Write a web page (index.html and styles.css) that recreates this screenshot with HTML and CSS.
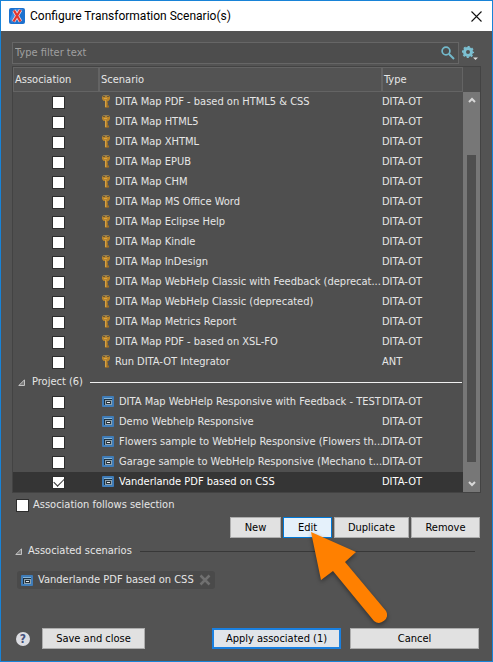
FILE: index.html
```html
<!DOCTYPE html>
<html lang="en">
<head>
<meta charset="utf-8">
<title>Configure Transformation Scenario(s)</title>
<link rel="stylesheet" href="styles.css">
</head>
<body>
<svg class="defs" aria-hidden="true">
  <symbol id="key" viewBox="0 0 8 13">
    <path d="M1 .5h6l1 1.500v2L6.500 6H5.500v6.500H3V6H1.500L0 4V2z" fill="#b98429"/>
    <path d="M1 1.500h2M5 1.500h2" stroke="#66563a"/>
    <path d="M1.500 .5h5" stroke="#8f7c55"/>
    <path d="M2 3.500h3M3.500 5v7" stroke="#d3a149" fill="none"/>
    <path d="M5 8h1v1.500H5zM5 10.500h2v2H5z" fill="#a37022"/>
  </symbol>
  <symbol id="proj" viewBox="0 0 12 11">
    <rect width="12" height="11" rx="1" fill="#3f7cb8"/>
    <rect x="2" y="2" width="8" height="7" fill="#1d3142"/>
    <path d="M2 2.500h8" stroke="#86b5d8"/>
    <path d="M3 4h7v5H3z" fill="#8fa3b0"/>
    <path d="M4 5h5v3H4z" fill="#26333d"/>
    <path d="M5 6h3v1H5z" fill="#e4e9ec"/>
  </symbol>
  <symbol id="twisty" viewBox="0 0 7 7">
    <path d="M6.500 .8v5.700H.8z" fill="#777" stroke="#c4c4c4"/>
  </symbol>
</svg>
<div class="window">
  <header class="titlebar">
    <svg class="logo" viewBox="0 0 16 16" aria-hidden="true">
      <rect width="16" height="16" rx="2" fill="#1c72cf"/>
      <path d="M1 11L5 1h9L3 15z" fill="#3d8ce0"/>
      <path d="M5 2.500l6.500 11M11.500 2L4.500 13.500" stroke="#f4d5d8" stroke-width="3.600"/>
      <path d="M5 2.500l6.500 11M11.500 2L4.500 13.500" stroke="#e0352c" stroke-width="2.200"/>
    </svg>
    <h1>Configure Transformation Scenario(s)</h1>
    <button class="close" aria-label="Close"><svg viewBox="0 0 11 11"><path d="M.5 .5l10 10M10.500 .5l-10 10" stroke="#111" stroke-width="1.100"/></svg></button>
  </header>
  <main>
    <div class="filter">
      <label class="search">
        <input type="text" placeholder="Type filter text" aria-label="Type filter text">
        <svg viewBox="0 0 14 14" aria-hidden="true"><circle cx="5" cy="5" r="3.900" fill="none" stroke="#73b9cb" stroke-width="1.700"/><path d="M8 8l5 5" stroke="#73b9cb" stroke-width="2"/></svg>
      </label>
      <button class="gear" aria-label="Settings"><svg viewBox="0 0 16 15">
        <circle cx="6" cy="6" r="3.500" fill="none" stroke="#7cc0d2" stroke-width="3"/>
        <circle cx="6" cy="6" r="5.300" fill="none" stroke="#7cc0d2" stroke-width="1.600" stroke-dasharray="2.100 2.063" stroke-dashoffset="1.050"/>
        <path d="M11 11.500h5l-2.500 2.500z" fill="#ddd"/></svg></button>
    </div>
    <div class="list">
      <table>
        <colgroup><col class="c-assoc"><col><col class="c-type"></colgroup>
        <thead><tr><th>Association</th><th>Scenario</th><th>Type</th></tr></thead>
        <tbody>
          <tr><td><input type="checkbox" aria-label="Associate"></td><td><svg class="key"><use href="#key"/></svg>DITA Map PDF - based on HTML5 &amp; CSS</td><td>DITA-OT</td></tr>
          <tr><td><input type="checkbox" aria-label="Associate"></td><td><svg class="key"><use href="#key"/></svg>DITA Map HTML5</td><td>DITA-OT</td></tr>
          <tr><td><input type="checkbox" aria-label="Associate"></td><td><svg class="key"><use href="#key"/></svg>DITA Map XHTML</td><td>DITA-OT</td></tr>
          <tr><td><input type="checkbox" aria-label="Associate"></td><td><svg class="key"><use href="#key"/></svg>DITA Map EPUB</td><td>DITA-OT</td></tr>
          <tr><td><input type="checkbox" aria-label="Associate"></td><td><svg class="key"><use href="#key"/></svg>DITA Map CHM</td><td>DITA-OT</td></tr>
          <tr><td><input type="checkbox" aria-label="Associate"></td><td><svg class="key"><use href="#key"/></svg>DITA Map MS Office Word</td><td>DITA-OT</td></tr>
          <tr><td><input type="checkbox" aria-label="Associate"></td><td><svg class="key"><use href="#key"/></svg>DITA Map Eclipse Help</td><td>DITA-OT</td></tr>
          <tr><td><input type="checkbox" aria-label="Associate"></td><td><svg class="key"><use href="#key"/></svg>DITA Map Kindle</td><td>DITA-OT</td></tr>
          <tr><td><input type="checkbox" aria-label="Associate"></td><td><svg class="key"><use href="#key"/></svg>DITA Map InDesign</td><td>DITA-OT</td></tr>
          <tr><td><input type="checkbox" aria-label="Associate"></td><td><svg class="key"><use href="#key"/></svg>DITA Map WebHelp Classic with Feedback (deprecat...</td><td>DITA-OT</td></tr>
          <tr><td><input type="checkbox" aria-label="Associate"></td><td><svg class="key"><use href="#key"/></svg>DITA Map WebHelp Classic (deprecated)</td><td>DITA-OT</td></tr>
          <tr><td><input type="checkbox" aria-label="Associate"></td><td><svg class="key"><use href="#key"/></svg>DITA Map Metrics Report</td><td>DITA-OT</td></tr>
          <tr><td><input type="checkbox" aria-label="Associate"></td><td><svg class="key"><use href="#key"/></svg>DITA Map PDF - based on XSL-FO</td><td>DITA-OT</td></tr>
          <tr><td><input type="checkbox" aria-label="Associate"></td><td><svg class="key"><use href="#key"/></svg>Run DITA-OT Integrator</td><td>ANT</td></tr>
          <tr class="group"><td colspan="3"><div class="group-head"><svg class="twisty"><use href="#twisty"/></svg>Project (6)</div></td></tr>
          <tr><td><input type="checkbox" aria-label="Associate"></td><td><svg class="proj"><use href="#proj"/></svg>DITA Map WebHelp Responsive with Feedback - TEST</td><td>DITA-OT</td></tr>
          <tr><td><input type="checkbox" aria-label="Associate"></td><td><svg class="proj"><use href="#proj"/></svg>Demo Webhelp Responsive</td><td>DITA-OT</td></tr>
          <tr><td><input type="checkbox" aria-label="Associate"></td><td><svg class="proj"><use href="#proj"/></svg>Flowers sample to WebHelp Responsive (Flowers th...</td><td>DITA-OT</td></tr>
          <tr><td><input type="checkbox" aria-label="Associate"></td><td><svg class="proj"><use href="#proj"/></svg>Garage sample to WebHelp Responsive (Mechano t...</td><td>DITA-OT</td></tr>
          <tr class="selected"><td><input type="checkbox" aria-label="Associate" checked></td><td><svg class="proj"><use href="#proj"/></svg>Vanderlande PDF based on CSS</td><td>DITA-OT</td></tr>
        </tbody>
      </table>
      <div class="scrollbar" aria-hidden="true">
        <svg viewBox="0 0 8 6"><path d="M1 5l3-3 3 3" fill="none" stroke="#d8d8d8" stroke-width="2"/></svg>
        <div class="thumb"></div>
        <svg viewBox="0 0 8 6"><path d="M1 1l3 3 3-3" fill="none" stroke="#d8d8d8" stroke-width="2"/></svg>
      </div>
    </div>
    <label class="follow"><input type="checkbox">Association follows selection</label>
    <div class="actions">
      <button class="btn new">New</button>
      <div class="edit-wrap">
        <button class="btn edit">Edit</button>
        <svg class="pointer" viewBox="0 0 86 100" aria-hidden="true"><path d="M4 4L49 24 38 34 79 83A8 8 0 0 1 67 93L26 43 14 52z" fill="#ff8000"/></svg>
      </div>
      <button class="btn duplicate">Duplicate</button>
      <button class="btn remove">Remove</button>
    </div>
    <h2><svg class="twisty"><use href="#twisty"/></svg>Associated scenarios</h2>
    <div class="chip"><svg class="proj"><use href="#proj"/></svg>Vanderlande PDF based on CSS
      <button aria-label="Remove scenario"><svg viewBox="0 0 12 12"><path d="M1.500 1.500l9 9M10.500 1.500l-9 9" stroke="#707070" stroke-width="2.500"/></svg></button>
    </div>
    <footer>
      <button class="help" aria-label="Help">?</button>
      <button class="btn save">Save and close</button>
      <button class="btn apply">Apply associated (1)</button>
      <button class="btn cancel">Cancel</button>
    </footer>
  </main>
</div>
</body>
</html>
```

FILE: styles.css
```css
* { box-sizing: border-box; }
body {
  margin: 0;
  font: 11px/14px "DejaVu Sans Condensed", "DejaVu Sans", sans-serif;
  color: #e6e6e6;
}
button, input { font: inherit; margin: 0; }
button { padding: 0; border: 0; background: none; }
svg { display: block; flex: none; }
.defs { position: absolute; width: 0; height: 0; }

.window {
  display: flex;
  flex-direction: column;
  min-height: 100vh;
  border: 1px solid #1883d7;
  background: #535353;
}
.titlebar {
  display: flex;
  align-items: center;
  height: 30px;
  padding: 0 10px 0 8px;
  background: #fff;
  color: #000;
}
.logo { width: 16px; height: 16px; }
h1 {
  flex: 1;
  margin: 0 0 0 5px;
  font: 12px/16px Roboto, sans-serif;
}
.close svg { width: 11px; height: 11px; }

main {
  display: flex;
  flex-direction: column;
  flex: 1;
  padding: 11px 11px 12px;
}
.filter { display: flex; align-items: center; gap: 3px; }
.search {
  display: flex;
  align-items: center;
  flex: 1;
  height: 22px;
  padding: 0 3px 0 2px;
  border: 1px solid #666;
  background: #4d4d4d;
}
.search input {
  flex: 1;
  min-width: 0;
  padding: 0;
  border: 0;
  outline: 0;
  background: none;
  color: #e6e6e6;
}
.search input::placeholder { color: #a0a0a0; opacity: 1; }
.search svg { width: 14px; height: 14px; }
.gear { width: 19px; }
.gear svg { width: 16px; height: 15px; }

.list {
  display: flex;
  margin-top: 2px;
  border: 1px solid #434343;
  background: #4f4f4f;
}
table {
  flex: 1;
  width: 0;
  border-collapse: separate;
  border-spacing: 0;
  table-layout: fixed;
}
.c-assoc { width: 86px; }
.c-type { width: 81px; }
th {
  height: 25px;
  padding: 0 1px;
  border: 1px solid #646464;
  background: #535353;
  text-align: left;
  font-weight: normal;
}
td {
  height: 20px;
  padding: 0 0 1px;
  white-space: nowrap;
}
td:first-child { padding: 1px 0 0 39px; }
td:nth-child(2) { padding-left: 3px; }
td svg { display: inline-block; vertical-align: middle; }
.key { width: 8px; height: 13px; margin-right: 5px; }
.proj { width: 12px; height: 11px; }
td .proj { margin-right: 5px; }
.group td:first-child { padding: 0 1px 0 5px; }
.group-head { display: flex; align-items: center; }
.twisty { width: 7px; height: 7px; }
.group-head .twisty { margin-right: 7px; }
.group-head::after {
  content: "";
  flex: 1;
  height: 1px;
  margin-left: 7px;
  background: #f0f0f0;
}
.selected td { background: #353535; color: #fff; }

input[type="checkbox"] {
  appearance: none;
  display: grid;
  place-items: center;
  width: 13px;
  height: 13px;
  border: 1px solid #2d2d2d;
  background: #fff;
}
input[type="checkbox"]:checked::after {
  content: "";
  width: 9px;
  height: 5px;
  margin-bottom: 3px;
  border: solid #333;
  border-width: 0 0 1px 1px;
  transform: rotate(-45deg);
}

.scrollbar {
  display: flex;
  flex-direction: column;
  align-items: center;
  justify-content: space-between;
  width: 17px;
  margin-top: 25px;
  padding: 5px 0;
  background: #777;
}
.scrollbar svg { width: 8px; height: 6px; }
.thumb { width: 9px; flex: 1; margin: 52px 0 19px; background: #4f4f4f; }

.follow {
  display: flex;
  align-items: center;
  gap: 4px;
  height: 14px;
  margin: 5px 0 0 4px;
}
.btn {
  height: 21px;
  border: 1px solid #adadad;
  background: #e1e1e1;
  color: #000;
  white-space: nowrap;
}
.actions {
  display: flex;
  justify-content: flex-end;
  gap: 2px;
  margin: 5px 1px 0 0;
}
.new { width: 51px; }
.edit-wrap { position: relative; width: 49px; }
.edit { display: block; width: 100%; border-color: #0078d7; background: #e5f1fb; }
.duplicate { width: 75px; }
.remove { width: 69px; }
.pointer {
  position: absolute;
  left: 24px;
  top: 11px;
  z-index: 1;
  width: 86px;
  height: 100px;
  filter: drop-shadow(0 2px 2px rgba(0, 0, 0, .4));
  pointer-events: none;
}
h2 {
  display: flex;
  align-items: center;
  margin: 6px 6px 0 3px;
  font: inherit;
}
h2 .twisty { margin-right: 6px; }
h2::after {
  content: "";
  flex: 1;
  height: 1px;
  margin-left: 8px;
  background: #383838;
}
.chip {
  display: flex;
  align-items: center;
  align-self: flex-start;
  gap: 5px;
  height: 18px;
  margin: 13px 0 0 5px;
  padding: 0 4px;
  border-radius: 3px;
  background: #4a4a4a;
}
.chip button svg { width: 12px; height: 12px; }
footer {
  display: flex;
  align-items: center;
  margin-top: auto;
  padding: 0 2px 0 4px;
}
.help {
  width: 14px;
  height: 14px;
  margin-right: 12px;
  border-radius: 50%;
  background: #dcdde2;
  color: #45507c;
  font-size: 12px;
  font-weight: bold;
}
.save { width: 103px; }
.apply {
  width: 129px;
  margin-left: auto;
  border: 2px solid #1a80e0;
  background: #e1e5ea;
}
.cancel { width: 129px; margin-left: 9px; }
```
